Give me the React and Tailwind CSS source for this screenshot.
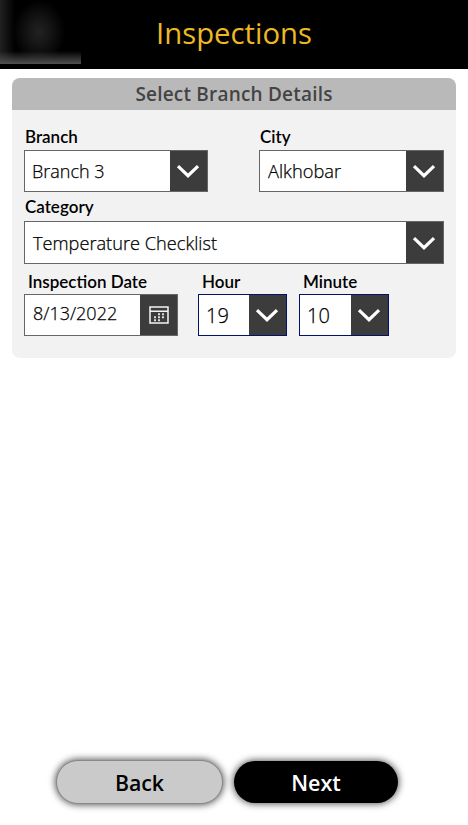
function Chevron() {
  return (
    <svg className="mr-px h-[14px] w-[24px]" viewBox="0 0 24 14" fill="none">
      <path d="M2 2.2 L12 11.7 L22 2.2" stroke="#fff" strokeWidth="3.2" />
    </svg>
  );
}

function CalendarIcon() {
  return (
    <svg className="h-[18px] w-[20px]" viewBox="0 0 20 18" fill="none">
      <path d="M1 1H19V17H1Z M1 5.2H19" stroke="#f4f4f4" strokeWidth="1.5" />
      <g fill="#dcdcdc">
        <path d="M9 7.2h2v2H9z M13 7.2h2v2h-2z M5 10.2h2v2H5z M9 10.2h2v2H9z M13 10.2h2v2h-2z M5 13.2h2v2H5z M9 13.2h2v2H9z" />
      </g>
    </svg>
  );
}

function Label({ children, className = "" }) {
  return (
    <div className={`font-['Lato',sans-serif] text-[17px] leading-[20px] font-semibold text-black whitespace-nowrap ${className}`}>
      {children}
    </div>
  );
}

function Select({ value, className = "", valueClass = "pl-[7px] text-[18px]", button = "w-[37px]", icon }) {
  return (
    <div className={`flex border bg-white ${className}`}>
      <div className={`flex flex-1 items-center font-light whitespace-nowrap text-black [-webkit-text-stroke:0.25px_black] ${valueClass}`}>
        {value}
      </div>
      <div className={`flex shrink-0 items-center justify-center bg-[#3c3c3c] ${button}`}>{icon || <Chevron />}</div>
    </div>
  );
}

export default function App() {
  return (
    <div className="flex h-[825px] w-[468px] flex-col overflow-hidden bg-white font-['Open_Sans',sans-serif]">
      <header className="relative h-[69px] shrink-0 bg-black">
        <div className="absolute top-0 left-0 h-[64px] w-[81px] overflow-hidden bg-black">
          <div className="absolute inset-0 bg-[radial-gradient(ellipse_26px_32px_at_39px_32px,#222_0%,#161616_40%,#000_100%)]" />
          <div className="absolute inset-y-0 left-0 w-[15px] bg-linear-to-r from-[#202020] to-transparent" />
          <div className="absolute inset-x-0 bottom-0 h-[13px] bg-linear-to-t from-[#505050] to-transparent" />
        </div>
        <h1 className="pt-[13px] text-center text-[29.3px] leading-[40px] font-normal text-[#edb923]">Inspections</h1>
      </header>

      <main className="mt-[9px] ml-[12px] h-[280px] w-[444px] shrink-0 overflow-hidden rounded-[8px] bg-[#f2f2f2]">
        <h2 className="h-[32px] bg-[#b9b9b9] text-center text-[19px] leading-[32px] font-semibold tracking-[0.2px] text-[#444]">
          Select Branch Details
        </h2>
        <div className="pt-[17px] pl-[12px]">
          <div className="flex gap-[51px]">
            <div className="w-[184px]">
              <Label className="pl-px">Branch</Label>
              <Select value="Branch 3" className="mt-[3px] h-[42px] border-[#666]" />
            </div>
            <div className="w-[185px]">
              <Label className="pl-px">City</Label>
              <Select value="Alkhobar" className="mt-[3px] h-[42px] border-[#666]" valueClass="pl-[8px] text-[18.3px]" />
            </div>
          </div>
          <Label className="mt-[5px] pl-px">Category</Label>
          <Select
            value="Temperature Checklist"
            className="mt-[4px] h-[43px] w-[420px] border-[#666]"
            valueClass="pl-[8px] pt-[2px] text-[18.2px]"
          />
          <div className="mt-[8px] flex">
            <div className="w-[154px]">
              <Label className="pl-[4px]">Inspection Date</Label>
              <Select
                value="8/13/2022"
                className="mt-[2px] h-[42px] border-[#666]"
                valueClass="pl-[8px] pb-[3px] text-[18px]"
                icon={<CalendarIcon />}
              />
            </div>
            <div className="ml-[20px] w-[89px]">
              <Label className="pl-[4px]">Hour</Label>
              <Select value="19" className="mt-[2px] h-[42px] border-[#00126b]" valueClass="pl-[7px] pt-[2px] text-[20px]" />
            </div>
            <div className="ml-[12px] w-[90px]">
              <Label className="pl-[4px]">Minute</Label>
              <Select value="10" className="mt-[2px] h-[42px] border-[#00126b]" valueClass="pl-[7px] pt-[2px] text-[20px]" />
            </div>
          </div>
        </div>
      </main>

      <footer className="mt-auto mb-[21px] ml-[56px] flex items-center gap-[11px]">
        <button className="h-[44px] w-[167px] rounded-full border border-[#888] bg-[#cacaca] pt-[2px] text-[21.3px] leading-none font-semibold text-black shadow-[0_0_7px_1px_rgba(0,0,0,0.65)]">
          Back
        </button>
        <button className="h-[42px] w-[164px] rounded-full bg-black pt-[2px] text-[21.5px] leading-none font-semibold text-white shadow-[0_0_7px_1px_rgba(0,0,0,0.65)]">
          Next
        </button>
      </footer>
    </div>
  );
}
